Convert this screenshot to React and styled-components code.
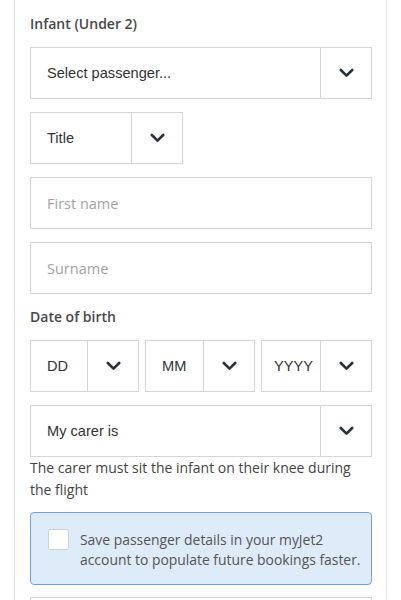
import React from "react";
import styled, { createGlobalStyle } from "styled-components";

const Global = createGlobalStyle`
  html, body { margin: 0; padding: 0; background: #fff; }
  * { box-sizing: border-box; }
`;

const Card = styled.div`
  margin-left: 14px;
  width: 373px;
  border-left: 1px solid #e2e2e2;
  border-right: 1px solid #e2e2e2;
  padding: 14px 14px 40px 15px;
  min-height: 620px;
  display: flex;
  flex-direction: column;
`;

const Label = styled.div`
  font-family: "Open Sans", sans-serif;
  font-size: 14px;
  font-weight: 600;
  color: #484848;
  line-height: 20px;
  margin-bottom: ${p => p.$mb || 13}px;
  margin-top: ${p => p.$mt || 0}px;
`;

const Select = styled.div`
  display: flex;
  height: 52px;
  width: ${p => (p.$w ? `${p.$w}px` : "100%")};
  border: 1px solid #d6d6d6;
  background: #fff;
  margin-bottom: ${p => (p.$mb === undefined ? 13 : p.$mb)}px;
`;

const SelectText = styled.div`
  flex: 1;
  display: flex;
  align-items: center;
  padding-left: ${p => p.$pl || 16}px;
  font-family: "Liberation Sans", Arial, sans-serif;
  font-size: 14.6px;
  color: #333;
  white-space: nowrap;
  overflow: hidden;
`;

const Arrow = styled.div`
  width: 51px;
  flex: none;
  border-left: 1px solid #d6d6d6;
  display: flex;
  align-items: center;
  justify-content: center;
`;

const Input = styled.div`
  height: 52px;
  border: 1px solid #d6d6d6;
  display: flex;
  align-items: center;
  padding-left: 16px;
  font-family: "Open Sans", sans-serif;
  font-size: 14.5px;
  color: #a3a3a3;
  margin-bottom: 13px;
`;

const DateRow = styled.div`
  display: grid;
  grid-template-columns: 109px 110px 111px;
  justify-content: space-between;
  margin-bottom: 13px;
`;

const Help = styled.p`
  margin: -13px 0 11px;
  font-family: "Open Sans", sans-serif;
  font-size: 14px;
  line-height: 22px;
  color: #444;
`;

const SaveBox = styled.label`
  display: flex;
  align-items: flex-start;
  gap: 11px;
  border: 1px solid #7c9ed6;
  border-radius: 4px;
  background: #deebf8;
  padding: 16px 2px 12px 17px;
  height: 73px;
  margin-bottom: 12px;
`;

const Check = styled.span`
  flex: none;
  width: 21px;
  height: 21px;
  background: #fff;
  border: 1px solid #c8d4e4;
  border-radius: 2px;
`;

const SaveText = styled.span`
  font-family: "Open Sans", sans-serif;
  font-size: 13.9px;
  line-height: 20px;
  color: #555;
  margin-top: 1px;
`;

const Chevron = () => (
  <svg width="15" height="10" viewBox="0 0 15 10">
    <path d="M1.8 2 L7.5 7.6 L13.2 2" fill="none" stroke="#26313d" strokeWidth="2.6" strokeLinecap="round" strokeLinejoin="round" />
  </svg>
);

const Dropdown = ({ text, w, mb, pl }) => (
  <Select $w={w} $mb={mb}>
    <SelectText $pl={pl}>{text}</SelectText>
    <Arrow><Chevron /></Arrow>
  </Select>
);

export default function App() {
  return (
    <>
      <Global />
      <Card>
        <Label $mb={13}>Infant (Under 2)</Label>
        <Dropdown text="Select passenger..." />
        <Dropdown text="Title" w={153} />
        <Input>First name</Input>
        <Input>Surname</Input>
        <Label $mb={13}>Date of birth</Label>
        <DateRow>
          <Dropdown text="DD" mb={0} />
          <Dropdown text="MM" mb={0} />
          <Dropdown text="YYYY" mb={0} pl={12} />
        </DateRow>
        <Dropdown text="My carer is" />
        <Help>The carer must sit the infant on their knee during the flight</Help>
        <SaveBox>
          <Check />
          <SaveText>Save passenger details in your myJet2 account to populate future bookings faster.</SaveText>
        </SaveBox>
        <Input />
      </Card>
    </>
  );
}
